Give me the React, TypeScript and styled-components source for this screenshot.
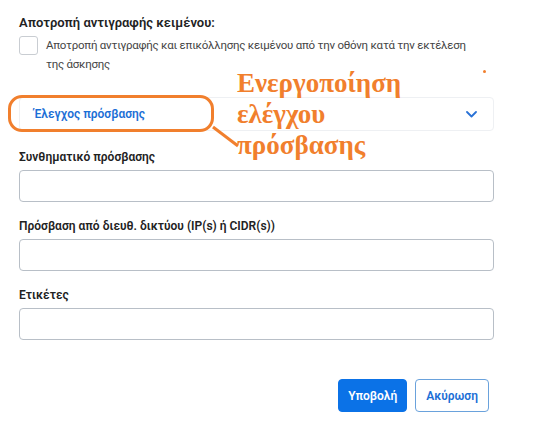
import React from "react";
import styled, { createGlobalStyle } from "styled-components";

const GlobalStyle = createGlobalStyle`
  html, body { margin: 0; padding: 0; background: #ffffff; }
  body { font-family: Roboto, "Noto Sans", sans-serif; color: #262626; }
  * { box-sizing: border-box; }
`;

const Page = styled.div`
  position: relative;
  width: 550px;
  height: 446px;
  padding: 15px 56px 0 19px;
  overflow: hidden;
`;

const SectionTitle = styled.div`
  font-size: 13px;
  font-weight: 600;
  line-height: 16px;
  color: #222;
`;

const CheckRow = styled.label`
  display: flex;
  gap: 8px;
  margin-top: 5px;
`;

const CheckBox = styled.span`
  flex-shrink: 0;
  width: 19px;
  height: 19px;
  border: 1px solid #c9cdd2;
  border-radius: 3px;
  background: #fff;
`;

const CheckText = styled.span`
  max-width: 440px;
  font-size: 11.5px;
  letter-spacing: -0.25px;
  line-height: 19px;
  color: #454545;
`;

const Accordion = styled.div`
  margin-top: 23px;
  height: 34px;
  border: 1px solid #eef0f3;
  border-radius: 4px;
  display: flex;
  align-items: center;
  justify-content: space-between;
  padding: 0 16px 0 14px;
`;

const AccordionTitle = styled.span`
  font-size: 12px;
  font-weight: 600;
  color: #1c6fd6;
`;

const Field = styled.div<{ $first?: boolean }>`
  margin-top: ${(p) => (p.$first ? "18px" : "16px")};
`;

const Label = styled.div`
  font-size: 12px;
  font-weight: 600;
  line-height: 16px;
  color: #222;
  margin-bottom: 5px;
`;

const Input = styled.input`
  display: block;
  width: 100%;
  height: 32px;
  border: 1px solid #b8bfc7;
  border-radius: 4px;
  background: #fff;
  outline: none;
`;

const Actions = styled.div`
  display: flex;
  justify-content: flex-end;
  gap: 8px;
  margin-top: 39px;
  padding-right: 5px;
`;

const Button = styled.button<{ $primary?: boolean }>`
  height: 33px;
  padding: 0 ${(p) => (p.$primary ? "9px" : "10px")};
  border-radius: 4px;
  font-family: inherit;
  font-size: 12px;
  font-weight: 600;
  cursor: pointer;
  border: 1px solid ${(p) => (p.$primary ? "#0b72e7" : "#6aa2dc")};
  background: ${(p) => (p.$primary ? "#0b72e7" : "#fff")};
  color: ${(p) => (p.$primary ? "#fff" : "#1c6fd6")};
`;

/* annotation overlay drawn on top of the screenshot */
const Oval = styled.div`
  position: absolute;
  left: 8px;
  top: 95px;
  width: 206px;
  height: 37px;
  border: 3px solid #f17f2d;
  border-radius: 14px;
  pointer-events: none;
`;

const Connector = styled.svg`
  position: absolute;
  left: 210px;
  top: 124px;
  pointer-events: none;
`;

const Note = styled.div`
  position: absolute;
  left: 237px;
  top: 68px;
  font-family: "Liberation Serif", "DejaVu Serif", serif;
  font-weight: 700;
  font-size: 27px;
  line-height: 31px;
  color: #f17f2d;
  pointer-events: none;
`;

const Dot = styled.span`
  position: absolute;
  left: 483px;
  top: 70px;
  width: 3px;
  height: 3px;
  border-radius: 50%;
  background: #f17f2d;
`;

const Chevron = () => (
  <svg width="11" height="7" viewBox="0 0 11 7" fill="none">
    <polyline
      points="1,1 5.5,5.5 10,1"
      stroke="#2a72d6"
      strokeWidth="1.8"
      strokeLinecap="round"
      strokeLinejoin="round"
    />
  </svg>
);

const fields = [
  "Συνθηματικό πρόσβασης",
  "Πρόσβαση από διευθ. δικτύου (IP(s) ή CIDR(s))",
  "Ετικέτες",
];

const App: React.FC = () => {
  return (
    <>
      <GlobalStyle />
      <Page>
        <SectionTitle>Αποτροπή αντιγραφής κειμένου:</SectionTitle>
        <CheckRow>
          <CheckBox />
          <CheckText>
            Αποτροπή αντιγραφής και επικόλλησης κειμένου από την οθόνη κατά την
            εκτέλεση της άσκησης
          </CheckText>
        </CheckRow>

        <Accordion>
          <AccordionTitle>Έλεγχος πρόσβασης</AccordionTitle>
          <Chevron />
        </Accordion>

        {fields.map((f, i) => (
          <Field key={f} $first={i === 0}>
            <Label>{f}</Label>
            <Input />
          </Field>
        ))}

        <Actions>
          <Button $primary>Υποβολή</Button>
          <Button>Ακύρωση</Button>
        </Actions>

        <Oval />
        <Connector width="32" height="26">
          <line x1="3" y1="3" x2="28" y2="22" stroke="#f17f2d" strokeWidth="3" />
        </Connector>
        <Note>
          Ενεργοποίηση
          <br />
          ελέγχου
          <br />
          πρόσβασης
        </Note>
        <Dot />
      </Page>
    </>
  );
};

export default App;
